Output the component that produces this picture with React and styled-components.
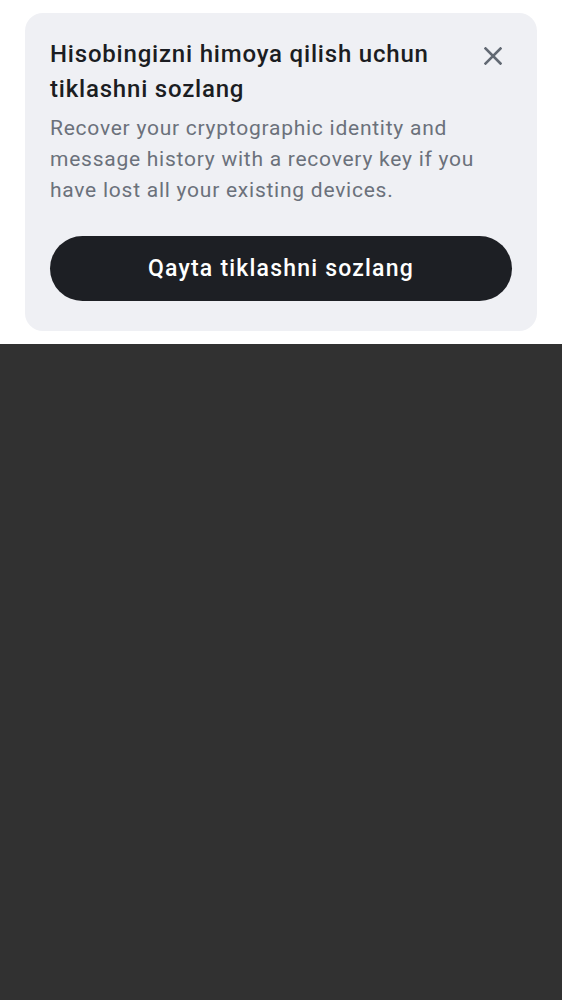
import React from "react";
import styled, { createGlobalStyle } from "styled-components";

const Global = createGlobalStyle`
  html, body { margin: 0; padding: 0; background: #313131; }
  body { font-family: Roboto, "Noto Sans", sans-serif; }
`;

const Page = styled.div`
  min-height: 1000px;
  display: flex;
  flex-direction: column;
  background: #313131;
`;

const TopSheet = styled.div`
  background: #ffffff;
  padding: 13px 25px 13px 25px;
`;

const Card = styled.section`
  background: #eff0f4;
  border-radius: 18px;
  padding: 24px 25px 30px 25px;
  display: flex;
  flex-direction: column;
`;

const Header = styled.div`
  display: flex;
  align-items: flex-start;
  gap: 12px;
`;

const Title = styled.h2`
  flex: 1;
  margin: 0;
  font-size: 24px;
  line-height: 35px;
  font-weight: 500;
  letter-spacing: 0.8px;
  color: #1b1d22;
`;

const CloseButton = styled.button`
  border: none;
  background: transparent;
  padding: 0;
  width: 30px;
  height: 30px;
  margin-top: 4px;
  margin-right: 4px;
  display: flex;
  align-items: center;
  justify-content: center;
  color: #626973;
  cursor: pointer;
`;

const Body = styled.p`
  margin: 6px 0 0 0;
  font-size: 21px;
  line-height: 31px;
  letter-spacing: 0.75px;
  color: #6b717b;
  font-weight: 400;
`;

const PrimaryButton = styled.button`
  margin-top: 30px;
  height: 65px;
  border: none;
  border-radius: 33px;
  background: #1d1f24;
  color: #ffffff;
  font-family: Roboto, "Noto Sans", sans-serif;
  font-size: 23px;
  letter-spacing: 1.2px;
  font-weight: 500;
  cursor: pointer;
`;

export default function App() {
  return (
    <>
      <Global />
      <Page>
        <TopSheet>
          <Card>
            <Header>
              <Title>Hisobingizni himoya qilish uchun tiklashni sozlang</Title>
              <CloseButton aria-label="Close">
                <svg width="18" height="18" viewBox="0 0 18 18">
                  <path d="M1.5 1.5 L16.5 16.5 M16.5 1.5 L1.5 16.5" stroke="currentColor" strokeWidth="2.6" strokeLinecap="square" />
                </svg>
              </CloseButton>
            </Header>
            <Body>
              Recover your cryptographic identity and message history with a recovery key if you have lost all your existing devices.
            </Body>
            <PrimaryButton>Qayta tiklashni sozlang</PrimaryButton>
          </Card>
        </TopSheet>
      </Page>
    </>
  );
}
